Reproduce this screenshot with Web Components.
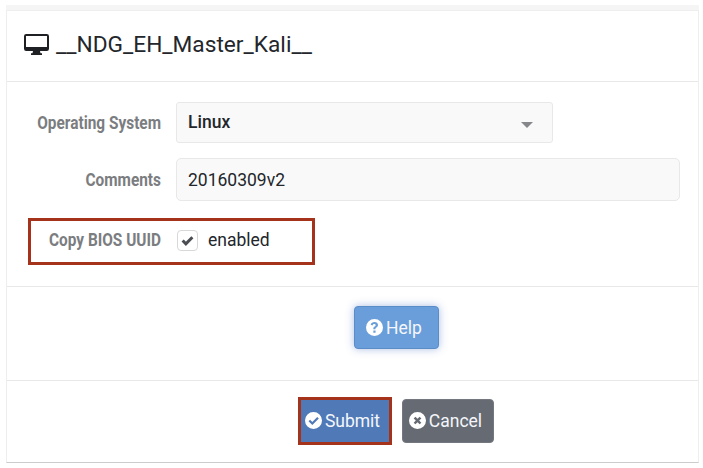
<!DOCTYPE html>
<html>
<head>
<meta charset="utf-8">
<style>
    html, body { margin: 0; padding: 0; background: #fff; }
    body { font-family: Roboto, "Liberation Sans", sans-serif; color: #23262b; width: 703px; height: 468px; overflow: hidden; }
</style>
</head>
<body>

<vm-panel>
    <vm-field label="Operating System" style="--row-h: 41px; --mt: 20px">
        <vm-select value="Linux"></vm-select>
    </vm-field>
    <vm-field label="Comments" style="--row-h: 43px; --mt: 15px">
        <vm-input value="20160309v2"></vm-input>
    </vm-field>
    <vm-field label="Copy BIOS UUID" marked style="--row-h: 47px; --mt: 17px">
        <vm-check text="enabled"></vm-check>
    </vm-field>
</vm-panel>

<script>
(function() {
    const ICONS = {
        question: '<path fill-rule="evenodd" d="M8 0a8 8 0 1 1 0 16A8 8 0 0 1 8 0zM8 2.900c-1.900 0-3.100.9-3.600 2.400l1.800.8c.3-.8.8-1.300 1.700-1.300.7 0 1.200.4 1.200 1 0 .5-.4.8-1 1.200-.8.5-1.200 1-1.200 2v.6h2v-.4c0-.5.3-.8.9-1.200.8-.5 1.500-1.100 1.500-2.300C11.300 4 9.900 2.900 8 2.900zM6.900 10.900v2h2.100v-2z"/>',
        check: '<path fill-rule="evenodd" d="M8 0a8 8 0 1 1 0 16A8 8 0 0 1 8 0zM6.900 12.300l6.100-6.100-1.500-1.500-4.600 4.600-2.100-2.100L3.300 8.700z"/>',
        cross: '<path fill-rule="evenodd" d="M8 0a8 8 0 1 1 0 16A8 8 0 0 1 8 0zM8 6.400 6 4.400 4.400 6l2 2-2 2L6 11.600l2-2 2 2 1.600-1.600-2-2 2-2L10 4.400z"/>'
    };

    class VmButton extends HTMLElement {
        constructor() {
            super();
            const root = this.attachShadow({ mode: 'open' });
            root.innerHTML = `
                <style>
                    :host { display: inline-flex; align-items: center; justify-content: center; gap: 3px; box-sizing: border-box; height: var(--h, 44px); width: var(--w, 92px); padding-right: 5px; border-radius: 4px; font-size: 17.500px; color: #f4f6fa; background: var(--bg, #666a73); border: var(--bd, 1px solid #74777f); box-shadow: var(--sh, none); }
                    svg { width: 17px; height: 17px; fill: #fff; flex: none; }
                </style>
                <svg viewBox="0 0 16 16">${ICONS[this.getAttribute('icon')]}</svg><slot></slot>`;
        }
    }
    customElements.define('vm-button', VmButton);

    class VmSelect extends HTMLElement {
        constructor() {
            super();
            const root = this.attachShadow({ mode: 'open' });
            root.innerHTML = `
                <style>
                    :host { display: flex; align-items: center; justify-content: space-between; box-sizing: border-box; width: 377px; height: 41px; padding: 0 19px 0 11px; background: #f9f9f9; border: 1px solid #e8e8e8; border-radius: 3px; font-size: 17.500px; font-weight: 500; }
                    span { margin-top: -2px; }
                    i { width: 0; height: 0; margin-top: 5px; border: 6px solid transparent; border-top: 6px solid #85878a; border-bottom: 0; }
                </style>
                <span>${this.getAttribute('value')}</span><i></i>`;
        }
    }
    customElements.define('vm-select', VmSelect);

    class VmInput extends HTMLElement {
        constructor() {
            super();
            const root = this.attachShadow({ mode: 'open' });
            root.innerHTML = `
                <style>
                    :host { display: flex; align-items: center; box-sizing: border-box; width: 504px; height: 43px; padding: 0 11px; background: #f9f9f9; border: 1px solid #e8e8e8; border-radius: 5px; font-size: 17.500px; }
                </style>
                <span>${this.getAttribute('value')}</span>`;
        }
    }
    customElements.define('vm-input', VmInput);

    class VmCheck extends HTMLElement {
        constructor() {
            super();
            const root = this.attachShadow({ mode: 'open' });
            root.innerHTML = `
                <style>
                    :host { display: flex; align-items: center; gap: 10px; font-size: 17.500px; margin: -3px 0 0 1px; }
                    b { display: flex; align-items: center; justify-content: center; box-sizing: border-box; width: 21px; height: 21px; background: #fff; border: 1px solid #d8d8d8; border-radius: 4px; }
                    svg { width: 13px; height: 11px; fill: none; stroke: #4a4d52; stroke-width: 2.800; }
                </style>
                <b><svg viewBox="0 0 12 10"><path d="M1.500 5l3 3 6-6"/></svg></b><span>${this.getAttribute('text')}</span>`;
        }
    }
    customElements.define('vm-check', VmCheck);

    class VmField extends HTMLElement {
        constructor() {
            super();
            const root = this.attachShadow({ mode: 'open' });
            root.innerHTML = `
                <style>
                    :host { display: flex; align-items: center; box-sizing: border-box; height: var(--row-h); margin-top: var(--mt); }
                    :host([marked]) { width: 287px; margin-left: 21px; border: 3px solid #a5321a; }
                    label { display: block; flex: none; width: 154px; margin-right: 15px; box-sizing: border-box; text-align: right; font-size: 17.500px; font-weight: 700; color: #7b7d80; white-space: nowrap; transform: scaleX(.88); transform-origin: right center; }
                    :host([marked]) label { width: 130px; margin-top: -3px; }
                </style>
                <label>${this.getAttribute('label')}</label><slot></slot>`;
        }
    }
    customElements.define('vm-field', VmField);

    class VmPanel extends HTMLElement {
        constructor() {
            super();
            const root = this.attachShadow({ mode: 'open' });
            root.innerHTML = `
                <style>
                    :host { display: block; box-sizing: border-box; width: 693px; height: 458px; margin: 5px 0 0 6px; border-top: 5px solid #f5f5f5; }
                    .card { box-sizing: border-box; height: 453px; border-left: 1px solid #eee; border-right: 1px solid #eee; border-bottom: 1px solid #ccc; border-top: 1px solid #eee; }
                    header { display: flex; align-items: center; gap: 7px; box-sizing: border-box; height: 71px; padding: 0 0 4px 17px; border-bottom: 1px solid #e8e8e8; font-size: 22.700px; color: #23262b; }
                    header svg { width: 25px; height: 21px; fill: #1f2023; flex: none; }
                    .form { height: 205px; border-bottom: 1px solid #e8e8e8; box-sizing: border-box; overflow: hidden; }
                    .help { box-sizing: border-box; height: 94px; padding: 19px 0 0 347px; border-bottom: 1px solid #e8e8e8; }
                    .actions { display: flex; align-items: center; gap: 10px; box-sizing: border-box; height: 81px; padding: 0 0 2px 291px; }
                    vm-button.help-btn { --w: 85px; --h: 43px; --bg: #6a9edb; --bd: 1px solid #5a8cc8; --sh: 0 0 8px rgba(70,110,190,.45); }
                    vm-button.submit { --w: 94px; --h: 48px; --bg: #5079b8; --bd: 3px solid #a5321a; border-radius: 0; }
                </style>
                <div class="card">
                    <header>
                        <svg viewBox="0 0 25 21"><path fill-rule="evenodd" d="M2.200 0h20.600A2.200 2.200 0 0 1 25 2.200v12.600a2.200 2.200 0 0 1-2.200 2.200H16l.5 2.200h1.500v1.800H7v-1.800h1.500L9 17H2.200A2.200 2.200 0 0 1 0 14.800V2.200A2.200 2.200 0 0 1 2.200 0zM2 2v11h21V2z"/></svg>
                        <span>__NDG_EH_Master_Kali__</span>
                    </header>
                    <div class="form"><slot></slot></div>
                    <div class="help"><vm-button class="help-btn" icon="question">Help</vm-button></div>
                    <div class="actions">
                        <vm-button class="submit" icon="check">Submit</vm-button>
                        <vm-button icon="cross">Cancel</vm-button>
                    </div>
                </div>`;
        }
    }
    customElements.define('vm-panel', VmPanel);
})();
</script>
</body>
</html>
